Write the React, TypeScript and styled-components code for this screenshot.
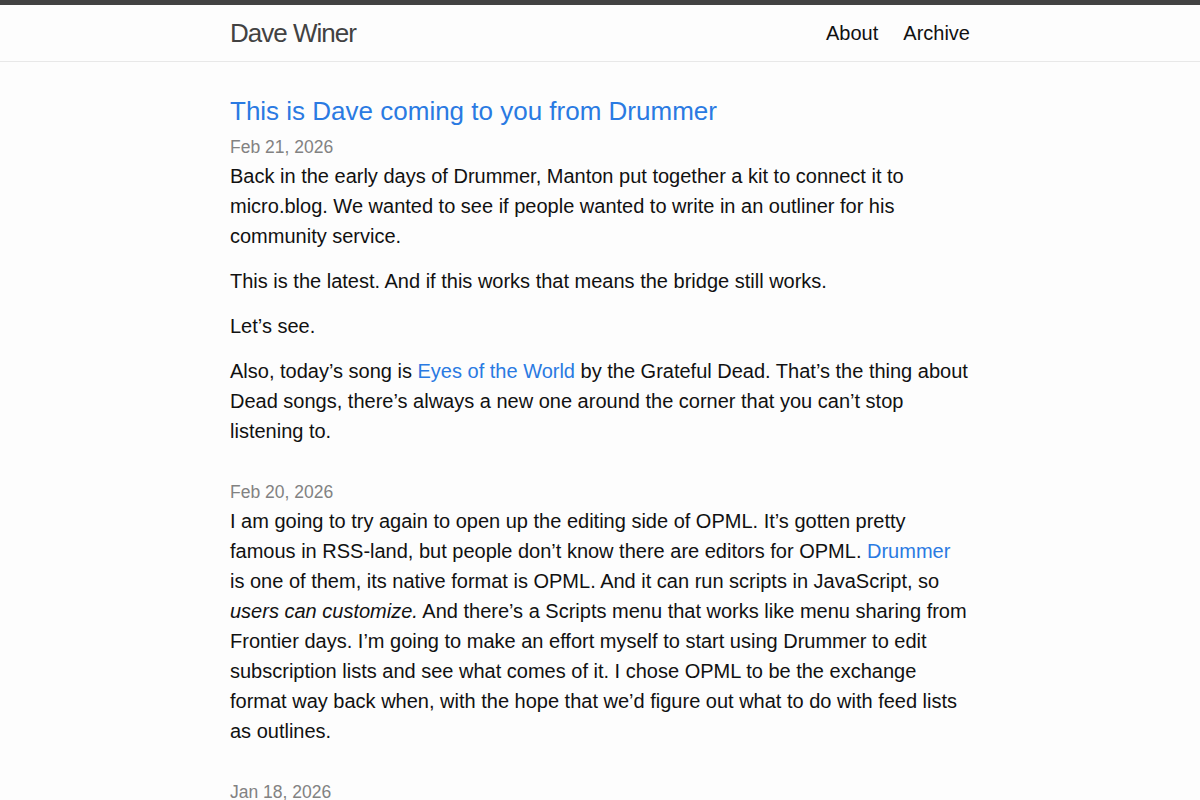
import React from "react";
import styled, { createGlobalStyle } from "styled-components";

const GlobalStyle = createGlobalStyle`
  html, body {
    margin: 0;
    padding: 0;
  }
  body {
    background: #fdfdfd;
    color: #111;
    font-family: "Liberation Sans", Arial, Helvetica, sans-serif;
    font-size: 20px;
    line-height: 30px;
    -webkit-font-smoothing: antialiased;
  }
  * {
    box-sizing: border-box;
  }
`;

const SiteHeader = styled.header`
  border-top: 5px solid #424242;
  border-bottom: 1px solid #e8e8e8;
  height: 62px;
`;

const Wrapper = styled.div`
  max-width: 740px;
  margin: 0 auto;
`;

const HeaderInner = styled(Wrapper)`
  display: flex;
  align-items: center;
  justify-content: space-between;
  height: 56px;
`;

const SiteTitle = styled.a`
  font-size: 26px;
  letter-spacing: -1px;
  color: #424242;
  text-decoration: none;
  line-height: 56px;
`;

const Nav = styled.nav`
  display: flex;
  gap: 25px;
`;

const NavLink = styled.a`
  color: #111;
  text-decoration: none;
  font-size: 20px;
  line-height: 56px;
`;

const Main = styled(Wrapper)`
  padding-top: 31px;
`;

const Post = styled.article`
  display: flow-root;
  margin-bottom: 17px;
`;

const PostTitle = styled.h2`
  margin: 0 0 4px;
  font-size: 26px;
  line-height: 36px;
  font-weight: normal;

  a {
    color: #2a7ae2;
    text-decoration: none;
  }
`;

const PostDate = styled.div`
  color: #828282;
  font-size: 17.5px;
  line-height: 28px;
`;

const Para = styled.p`
  margin: 0 0 15px;
`;

const Link = styled.a`
  color: #2a7ae2;
  text-decoration: none;
`;

export default function App() {
  return (
    <>
      <GlobalStyle />
      <SiteHeader>
        <HeaderInner>
          <SiteTitle href="#">Dave Winer</SiteTitle>
          <Nav>
            <NavLink href="#">About</NavLink>
            <NavLink href="#">Archive</NavLink>
          </Nav>
        </HeaderInner>
      </SiteHeader>
      <Main>
        <Post>
          <PostTitle>
            <a href="#">This is Dave coming to you from Drummer</a>
          </PostTitle>
          <PostDate>Feb 21, 2026</PostDate>
          <Para>
            Back in the early days of Drummer, Manton put together a kit to
            connect it to micro.blog. We wanted to see if people wanted to
            write in an outliner for his community service.
          </Para>
          <Para>
            This is the latest. And if this works that means the bridge still
            works.
          </Para>
          <Para>Let’s see.</Para>
          <Para>
            Also, today’s song is <Link href="#">Eyes of the World</Link> by
            the Grateful Dead. That’s the thing about Dead songs, there’s
            always a new one around the corner that you can’t stop listening
            to.
          </Para>
        </Post>
        <Post>
          <PostDate>Feb 20, 2026</PostDate>
          <Para>
            I am going to try again to open up the editing side of OPML. It’s
            gotten pretty famous in RSS-land, but people don’t know there are
            editors for OPML. <Link href="#">Drummer</Link> is one of them,
            its native format is OPML. And it can run scripts in JavaScript,
            so <em>users can customize.</em> And there’s a Scripts menu that
            works like menu sharing from Frontier days. I’m going to make an
            effort myself to start using Drummer to edit subscription lists
            and see what comes of it. I chose OPML to be the exchange format
            way back when, with the hope that we’d figure out what to do with
            feed lists as outlines.
          </Para>
        </Post>
        <Post>
          <PostDate>Jan 18, 2026</PostDate>
        </Post>
      </Main>
    </>
  );
}
